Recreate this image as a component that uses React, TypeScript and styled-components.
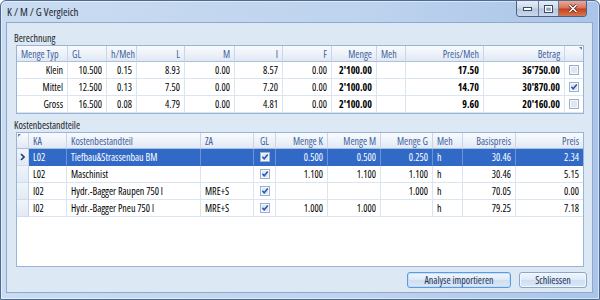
import styled, { createGlobalStyle } from "styled-components";

type Align = "left" | "right" | "center";
type Value = string | boolean;

interface Column {
  title: string;
  width: number;
  align: Align;
  headAlign?: Align;
  bold?: boolean;
}

const GlobalStyle = createGlobalStyle`
  html, body {
    margin: 0;
    padding: 0;
  }
  body {
    background: #ffffff;
    font-family: "Open Sans", "Liberation Sans", Arial, sans-serif;
    font-stretch: 75%;
    font-size: 10px;
    color: #000;
  }
`;

const justify = (a: Align) =>
  a === "left" ? "flex-start" : a === "right" ? "flex-end" : "center";

const Window = styled.div`
  box-sizing: border-box;
  width: 600px;
  height: 300px;
  display: flex;
  flex-direction: column;
  padding: 0 6px 6px 5px;
  border: 1px solid #4d6a92;
  border-radius: 6px 6px 0 0;
  background: linear-gradient(90deg, #cadcf1 0%, #bed3ee 60%, #aac5e8 100%);
  box-shadow: inset 0 0 0 1px rgba(255, 255, 255, 0.5);
`;

const TitleBar = styled.div`
  height: 21px;
  display: flex;
  align-items: center;
  padding-left: 1px;
  font-size: 11px;
  color: #1b2430;
`;

const CaptionGroup = styled.div`
  margin-left: auto;
  margin-right: 6px;
  align-self: flex-start;
  display: flex;
  height: 15px;
  border: 1px solid #4e607e;
  border-top: none;
  border-radius: 0 0 4px 4px;
  overflow: hidden;
`;

const CaptionButton = styled.div<{ $w: number; $close?: boolean }>`
  box-sizing: border-box;
  width: ${(p) => p.$w}px;
  display: flex;
  align-items: center;
  justify-content: center;
  background: ${(p) =>
    p.$close
      ? "linear-gradient(180deg, #e9ab9a 0%, #d77058 48%, #c2401f 52%, #d8764f 100%)"
      : "linear-gradient(180deg, #e6edf6 0%, #ccd9ea 48%, #b5c6dd 52%, #cad8eb 100%)"};
  & + & {
    border-left: 1px solid #6a7d9a;
  }
`;

const Client = styled.div`
  flex: 1;
  min-height: 0;
  display: flex;
  flex-direction: column;
  padding: 8px 8px 4px 7px;
  border: 1px solid #8fa9cd;
  background: #dde8f5;
`;

const SectionLabel = styled.div`
  height: 14px;
  line-height: 14px;
  color: #1c1c1c;
`;

const Gap = styled.div`
  height: 4px;
`;

const Grid = styled.div<{ $fill?: boolean; $corner?: "left" | "right" }>`
  position: relative;
  margin-left: 2px;
  display: flex;
  flex-direction: column;
  flex: ${(p) => (p.$fill ? "1" : "none")};
  border: 1px solid #99b4d9;
  background: #ffffff;
  overflow: hidden;
  &::after {
    content: "";
    position: absolute;
    top: 1px;
    ${(p) => (p.$corner === "left" ? "left: 1px;" : "right: 1px;")}
    border-top: 3px solid #6b7f9e;
    ${(p) =>
      p.$corner === "left"
        ? "border-right: 3px solid transparent;"
        : "border-left: 3px solid transparent;"}
  }
`;

const Row = styled.div<{ $cols: string }>`
  display: grid;
  grid-template-columns: ${(p) => p.$cols};
`;

const HeadCell = styled.div<{ $align: Align }>`
  box-sizing: border-box;
  height: 16px;
  padding: 0 4px;
  display: flex;
  align-items: center;
  justify-content: ${(p) => justify(p.$align)};
  white-space: nowrap;
  overflow: hidden;
  color: #3e629a;
  background: linear-gradient(180deg, #f8fafd 0%, #edf2f9 55%, #e0e8f4 100%);
  border-right: 1px solid #c8d6ea;
  border-bottom: 1px solid #a9c0df;
  &:last-child {
    border-right: none;
  }
`;

const Cell = styled.div<{ $align: Align; $bold?: boolean; $sel?: boolean }>`
  box-sizing: border-box;
  height: 17px;
  padding: 0 4px;
  display: flex;
  align-items: center;
  justify-content: ${(p) => justify(p.$align)};
  white-space: nowrap;
  overflow: hidden;
  font-weight: ${(p) => (p.$bold ? 700 : 400)};
  color: ${(p) => (p.$sel ? "#ffffff" : "#000000")};
  background: ${(p) => (p.$sel ? "#3169c6" : "#ffffff")};
  border-right: 1px solid ${(p) => (p.$sel ? "#6e93d4" : "#dbe4f1")};
  border-bottom: 1px solid ${(p) => (p.$sel ? "#3169c6" : "#dbe4f1")};
  &:last-child {
    border-right: none;
  }
`;

const Indicator = styled.div`
  box-sizing: border-box;
  height: 17px;
  display: flex;
  align-items: center;
  justify-content: center;
  background: linear-gradient(180deg, #f0f4fa 0%, #e2eaf5 100%);
  border-right: 1px solid #c3d2e8;
  border-bottom: 1px solid #d0dbeb;
`;

const ButtonRow = styled.div`
  display: flex;
  justify-content: flex-end;
  gap: 8px;
  margin-top: 5px;
  margin-right: -3px;
`;

const Button = styled.button<{ $w: number; $default?: boolean }>`
  box-sizing: border-box;
  width: ${(p) => p.$w}px;
  height: 16px;
  padding: 0;
  font-family: inherit;
  font-stretch: inherit;
  font-size: 10px;
  color: #1d3557;
  border-radius: 3px;
  border: 1px solid ${(p) => (p.$default ? "#5f98dc" : "#8aa6cb")};
  box-shadow: ${(p) =>
    p.$default ? "inset 0 0 0 1px #bfe0fa" : "inset 0 0 0 1px #f3f8fe"};
  background: linear-gradient(180deg, #f1f6fd 0%, #dfeaf7 48%, #cedff3 52%, #dbe8f7 100%);
`;

const berechnungCols: Column[] = [
  { title: "Menge Typ", width: 51, align: "right", headAlign: "left" },
  { title: "GL", width: 39, align: "right", headAlign: "left" },
  { title: "h/Meh", width: 30, align: "right", headAlign: "left" },
  { title: "L", width: 48, align: "right" },
  { title: "M", width: 50, align: "right" },
  { title: "I", width: 48, align: "right" },
  { title: "F", width: 49, align: "right" },
  { title: "Menge", width: 45, align: "right", bold: true },
  { title: "Meh", width: 29, align: "left" },
  { title: "Preis/Meh", width: 78, align: "right", bold: true },
  { title: "Betrag", width: 81, align: "right", bold: true },
  { title: "", width: 18, align: "center" },
];

const berechnungRows: Value[][] = [
  ["Klein", "10.500", "0.15", "8.93", "0.00", "8.57", "0.00", "2'100.00", "", "17.50", "36'750.00", false],
  ["Mittel", "12.500", "0.13", "7.50", "0.00", "7.20", "0.00", "2'100.00", "", "14.70", "30'870.00", true],
  ["Gross", "16.500", "0.08", "4.79", "0.00", "4.81", "0.00", "2'100.00", "", "9.60", "20'160.00", false],
];

const kostenCols: Column[] = [
  { title: "KA", width: 38, align: "left" },
  { title: "Kostenbestandteil", width: 134, align: "left" },
  { title: "ZA", width: 53, align: "left" },
  { title: "GL", width: 22, align: "center" },
  { title: "Menge K", width: 52, align: "right" },
  { title: "Menge M", width: 53, align: "right" },
  { title: "Menge G", width: 52, align: "right" },
  { title: "Meh", width: 30, align: "left" },
  { title: "Basispreis", width: 53, align: "right" },
  { title: "Preis", width: 67, align: "right" },
];

const kostenRows: Value[][] = [
  ["L02", "Tiefbau&Strassenbau BM", "", true, "0.500", "0.500", "0.250", "h", "30.46", "2.34"],
  ["L02", "Maschinist", "", true, "1.100", "1.100", "1.100", "h", "30.46", "5.15"],
  ["I02", "Hydr.-Bagger Raupen 750 l", "MRE+S", true, "", "", "1.000", "h", "70.05", "0.00"],
  ["I02", "Hydr.-Bagger Pneu 750 l", "MRE+S", true, "1.000", "1.000", "", "h", "79.25", "7.18"],
];

const INDICATOR = 12;

function CheckBox({ checked }: { checked: boolean }) {
  return (
    <svg width="10" height="10" viewBox="0 0 10 10">
      <rect x="0.5" y="0.5" width="9" height="9" fill="#f4f7fb" stroke="#9bb0cf" />
      <rect x="2" y="2" width="6" height="6" fill="#dfe7f2" />
      {checked && (
        <path d="M2.4 4.8 L4.2 6.8 L7.8 2.6" fill="none" stroke="#2a56a8" strokeWidth="1.5" />
      )}
    </svg>
  );
}

function renderValue(v: Value) {
  return typeof v === "boolean" ? <CheckBox checked={v} /> : v;
}

function Berechnung() {
  const cols = berechnungCols.map((c) => `${c.width}px`).join(" ");
  return (
    <Grid $corner="right">
      <Row $cols={cols}>
        {berechnungCols.map((c, i) => (
          <HeadCell key={i} $align={c.headAlign ?? c.align}>
            {c.title}
          </HeadCell>
        ))}
      </Row>
      {berechnungRows.map((r, ri) => (
        <Row key={ri} $cols={cols}>
          {r.map((v, ci) => (
            <Cell key={ci} $align={berechnungCols[ci].align} $bold={berechnungCols[ci].bold}>
              {renderValue(v)}
            </Cell>
          ))}
        </Row>
      ))}
    </Grid>
  );
}

function Kosten() {
  const cols = [INDICATOR, ...kostenCols.map((c) => c.width)].map((w) => `${w}px`).join(" ");
  const selected = 0;
  return (
    <Grid $fill $corner="left">
      <Row $cols={cols}>
        <HeadCell $align="center" />
        {kostenCols.map((c, i) => (
          <HeadCell key={i} $align={c.headAlign ?? c.align}>
            {c.title}
          </HeadCell>
        ))}
      </Row>
      {kostenRows.map((r, ri) => (
        <Row key={ri} $cols={cols}>
          <Indicator>
            {ri === selected && (
              <svg width="5" height="8" viewBox="0 0 5 8">
                <path d="M1 1 L4 4 L1 7" fill="none" stroke="#22406e" strokeWidth="1.6" />
              </svg>
            )}
          </Indicator>
          {r.map((v, ci) => (
            <Cell key={ci} $align={kostenCols[ci].align} $sel={ri === selected}>
              {renderValue(v)}
            </Cell>
          ))}
        </Row>
      ))}
    </Grid>
  );
}

export default function App() {
  return (
    <>
      <GlobalStyle />
      <Window>
        <TitleBar>
          K / M / G Vergleich
          <CaptionGroup>
            <CaptionButton $w={21}>
              <svg width="9" height="4" viewBox="0 0 9 4">
                <rect x="0.5" y="0.5" width="8" height="3" fill="#ffffff" stroke="#3a4a66" />
              </svg>
            </CaptionButton>
            <CaptionButton $w={20}>
              <svg width="9" height="8" viewBox="0 0 9 8">
                <rect x="0.5" y="0.5" width="8" height="7" fill="none" stroke="#3a4a66" />
                <rect x="1.5" y="1.5" width="6" height="5" fill="none" stroke="#ffffff" />
                <rect x="2.5" y="3" width="4" height="2.5" fill="#8fa2bf" />
              </svg>
            </CaptionButton>
            <CaptionButton $w={28} $close>
              <svg width="10" height="9" viewBox="0 0 10 9">
                <path d="M1.5 1 L8.5 8 M8.5 1 L1.5 8" stroke="#5a1a0c" strokeWidth="3" />
                <path d="M1.5 1 L8.5 8 M8.5 1 L1.5 8" stroke="#ffffff" strokeWidth="1.6" />
              </svg>
            </CaptionButton>
          </CaptionGroup>
        </TitleBar>
        <Client>
          <SectionLabel>Berechnung</SectionLabel>
          <Berechnung />
          <Gap />
          <SectionLabel>Kostenbestandteile</SectionLabel>
          <Kosten />
          <ButtonRow>
            <Button $w={104} $default>
              Analyse importieren
            </Button>
            <Button $w={68}>Schliessen</Button>
          </ButtonRow>
        </Client>
      </Window>
    </>
  );
}
